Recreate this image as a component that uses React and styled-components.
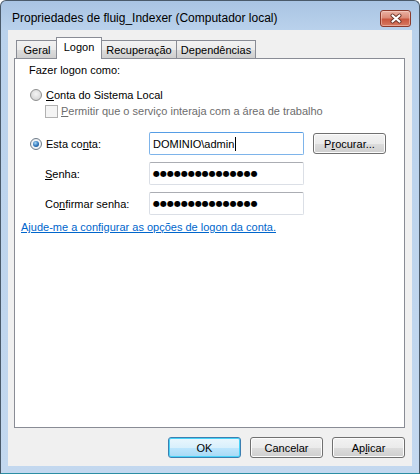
import React from 'react'
import styled, { createGlobalStyle, css } from 'styled-components'

const GlobalStyle = createGlobalStyle`
  html, body {
    margin: 0;
    padding: 0;
    background: #ffffff;
  }
  body {
    font-family: "Liberation Sans", Arial, sans-serif;
    font-size: 11px;
    color: #000;
  }
`

function App() {
  return (
    <>
      <GlobalStyle />
      <Window>
        <TitleBar>
          <Title>Propriedades de fluig_Indexer (Computador local)</Title>
          <CloseButton aria-label="Fechar">
            <svg width="14" height="11" viewBox="0 0 14 11">
              <path d="M3.5 2.5 L10.5 8.5 M10.5 2.5 L3.5 8.5" stroke="#6b3328" strokeWidth="4" strokeLinecap="round" />
              <path d="M3.5 2.5 L10.5 8.5 M10.5 2.5 L3.5 8.5" stroke="#ffffff" strokeWidth="2.2" strokeLinecap="round" />
            </svg>
          </CloseButton>
        </TitleBar>

        <Client>
          <TabStrip>
            <Tab $w={42}>Geral</Tab>
            <Tab $w={46} $active>Logon</Tab>
            <Tab $w={76}>Recuperação</Tab>
            <Tab $w={80}>Dependências</Tab>
          </TabStrip>

          <Panel>
            <Heading>Fazer logon como:</Heading>

            <OptionRow>
              <Radio />
              <span><u>C</u>onta do Sistema Local</span>
            </OptionRow>
            <CheckRow>
              <Checkbox />
              <span><u>P</u>ermitir que o serviço interaja com a área de trabalho</span>
            </CheckRow>

            <AccountGrid>
              <OptionRow>
                <Radio $checked />
                <span>Esta co<u>n</u>ta:</span>
              </OptionRow>
              <TextBox $focused>DOMINIO\admin<Caret /></TextBox>
              <Button>P<u>r</u>ocurar...</Button>

              <FieldLabel><u>S</u>enha:</FieldLabel>
              <TextBox><Dots>●●●●●●●●●●●●●●●</Dots></TextBox>
              <span />

              <FieldLabel>Co<u>n</u>firmar senha:</FieldLabel>
              <TextBox><Dots>●●●●●●●●●●●●●●●</Dots></TextBox>
              <span />
            </AccountGrid>

            <HelpLink>Ajude-me a configurar as opções de logon da conta.</HelpLink>
          </Panel>

          <ButtonRow>
            <Button $default>OK</Button>
            <Button>Cancelar</Button>
            <Button>Ap<u>l</u>icar</Button>
          </ButtonRow>
        </Client>
      </Window>
    </>
  )
}

export default App

const Window = styled.div`
  box-sizing: border-box;
  width: 420px;
  height: 474px;
  display: flex;
  flex-direction: column;
  border: 1px solid #4a5a6a;
  border-bottom-color: #2b8ea3;
  border-radius: 6px 6px 0 0;
  background: linear-gradient(to bottom, #a9c4e3 0px, #bad2ec 30px, #c3d8ef 100%);
  padding: 0 7px 7px 7px;
`

const TitleBar = styled.div`
  height: 29px;
  display: flex;
  align-items: flex-start;
  justify-content: space-between;
  padding: 0 1px 0 4px;
`

const Title = styled.div`
  font-size: 12px;
  line-height: 14px;
  color: #000;
  padding-top: 10px;
`

const CloseButton = styled.button`
  box-sizing: border-box;
  width: 31px;
  height: 17px;
  margin-top: 9px;
  padding: 0;
  display: flex;
  align-items: center;
  justify-content: center;
  border: 1px solid #8b3b2d;
  border-radius: 3px;
  background: linear-gradient(to bottom, #eab2a4 0%, #dc8b77 45%, #c9573f 55%, #d77a62 100%);
  box-shadow: inset 0 0 0 1px rgba(255, 225, 215, 0.45);
`

const Client = styled.div`
  flex: 1;
  display: flex;
  flex-direction: column;
  background: #f0f0f0;
  padding: 7px 6px 0 6px;
`

const TabStrip = styled.div`
  display: flex;
  align-items: flex-end;
  height: 22px;
  padding-left: 2px;
  position: relative;
  z-index: 1;
  margin-bottom: -1px;
`

const Tab = styled.div`
  box-sizing: border-box;
  width: ${p => p.$w}px;
  height: 18px;
  margin: 0 0 1px -1px;
  display: flex;
  align-items: center;
  justify-content: center;
  border: 1px solid #898c95;
  border-bottom: none;
  background: linear-gradient(to bottom, #f2f2f2 0%, #ebebeb 50%, #dddddd 51%, #cfcfcf 100%);
  white-space: nowrap;
  &:first-child {
    margin-left: 0;
  }
  ${p => p.$active && css`
    height: 22px;
    margin: 0 0 0 -2px;
    padding-bottom: 3px;
    background: #ffffff;
    position: relative;
    z-index: 2;
  `}
`

const Panel = styled.div`
  box-sizing: border-box;
  height: 370px;
  margin-right: 1px;
  background: #ffffff;
  border: 1px solid #898c95;
  display: flex;
  flex-direction: column;
`

const Heading = styled.div`
  height: 16px;
  line-height: 16px;
  margin: 3px 0 0 14px;
`

const OptionRow = styled.label`
  display: flex;
  align-items: center;
  gap: 4px;
  height: 16px;
  margin: 9px 0 0 15px;
  white-space: nowrap;
`

const CheckRow = styled.label`
  display: flex;
  align-items: center;
  gap: 3px;
  height: 16px;
  margin: 0 0 0 30px;
  color: #6d6d6d;
  white-space: nowrap;
`

const Radio = styled.span`
  box-sizing: border-box;
  width: 12px;
  height: 12px;
  border-radius: 50%;
  border: 1px solid #8e8f8f;
  background: radial-gradient(circle at 50% 40%, #f4f4f4 0%, #dcdcdc 60%, #c8c8c8 100%);
  flex: none;
  position: relative;
  ${p => p.$checked && css`
    border-color: #6f7c89;
    background: radial-gradient(circle at 50% 50%, #ffffff 0%, #e3e8ee 100%);
    &::after {
      content: '';
      position: absolute;
      left: 2px;
      top: 2px;
      width: 6px;
      height: 6px;
      border-radius: 50%;
      background: radial-gradient(circle at 40% 35%, #a6d8f7 0%, #2c72b8 55%, #14487e 100%);
    }
  `}
`

const Checkbox = styled.span`
  box-sizing: border-box;
  width: 13px;
  height: 13px;
  border: 1px solid #b1b1b1;
  background: #f4f4f4;
  flex: none;
`

const AccountGrid = styled.div`
  display: grid;
  grid-template-columns: 125px 155px 73px;
  grid-auto-rows: 23px;
  column-gap: 9px;
  row-gap: 7px;
  align-items: center;
  margin-top: 13px;

  & > ${OptionRow} {
    margin-top: 0;
  }
`

const FieldLabel = styled.span`
  padding-left: 30px;
  white-space: nowrap;
`

const TextBox = styled.div`
  box-sizing: border-box;
  height: 23px;
  display: flex;
  align-items: center;
  padding: 0 3px;
  background: #fff;
  border: 1px solid #dbdfe6;
  border-top-color: #abadb3;
  border-radius: 2px;
  white-space: nowrap;
  font-size: 11px;
  ${p => p.$focused && css`
    border-color: #7eb4ea;
    border-top-color: #569de5;
  `}
`

const Caret = styled.span`
  display: inline-block;
  width: 1px;
  height: 14px;
  margin-left: 1px;
  background: #000;
`

const Dots = styled.span`
  font-family: "DejaVu Sans", sans-serif;
  font-size: 8px;
  line-height: 1;
`

const HelpLink = styled.a`
  margin: 4px 0 0 6px;
  height: 16px;
  line-height: 16px;
  color: #0066cc;
  text-decoration: underline;
  cursor: pointer;
`

const Button = styled.button`
  box-sizing: border-box;
  width: 73px;
  height: 21px;
  padding: 0;
  font-family: inherit;
  font-size: 11px;
  color: #000;
  border: 1px solid #707070;
  border-radius: 3px;
  background: linear-gradient(to bottom, #f2f2f2 0%, #ebebeb 50%, #dddddd 51%, #cfcfcf 100%);
  box-shadow: inset 0 0 0 1px #fcfcfc;
  ${p => p.$default && css`
    border-color: #3c7fb1;
    background: linear-gradient(to bottom, #eaf6fd 0%, #d9f0fc 50%, #bee6fd 51%, #a7d9f5 100%);
    box-shadow: inset 0 0 0 1px #48d3f8;
  `}
`

const ButtonRow = styled.div`
  display: flex;
  justify-content: flex-end;
  gap: 9px;
  padding: 9px 0 0 0;
  margin-right: 1px;
`
